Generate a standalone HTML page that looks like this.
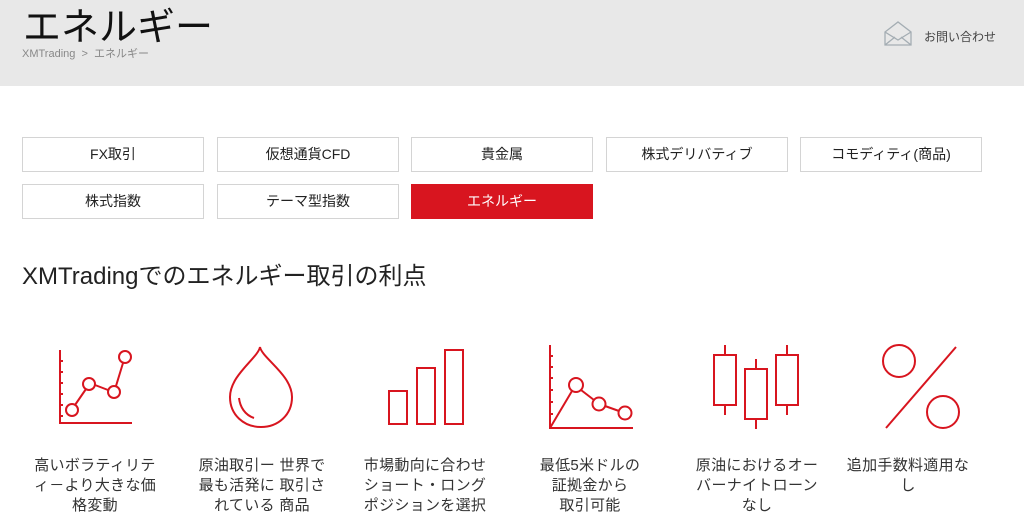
<!DOCTYPE html>
<html><head><meta charset="utf-8"><style>
*{margin:0;padding:0;box-sizing:border-box}
body{width:1024px;height:520px;overflow:hidden;background:#fff;font-family:"Liberation Sans","Noto Sans CJK JP",sans-serif;color:#222;position:relative}
.hdr{position:absolute;left:0;top:0;width:1024px;height:86px;background:#e8e8e8}
.title{position:absolute;left:23px;top:-4px;font-size:38px;color:#111;white-space:nowrap}
.bc{position:absolute;left:22px;top:45px;font-size:11px;color:#888;white-space:nowrap}
.ct{position:absolute;left:924px;top:28px;font-size:12px;color:#444}
.btn{position:absolute;width:182px;height:35px;border:1px solid #d4d4d4;background:#fff;font-size:14px;color:#222;text-align:center;line-height:33px}
.btn.on{background:#d8151f;border-color:#d8151f;color:#fff}
h2{position:absolute;left:22px;top:256px;font-size:24px;font-weight:normal;color:#222;white-space:nowrap}
.t{position:absolute;top:456px;width:160px;text-align:center;font-size:15px;line-height:20px;color:#333;white-space:nowrap;letter-spacing:0.3px}
svg{position:absolute;left:0;top:0}
</style></head><body>
<div class="hdr"></div>
<div class="title">エネルギー</div>
<div class="bc">XMTrading &nbsp;&gt;&nbsp; エネルギー</div>
<div class="ct">お問い合わせ</div>
<div class="btn" style="left:22px;top:137px">FX取引</div>
<div class="btn" style="left:217px;top:137px">仮想通貨CFD</div>
<div class="btn" style="left:411px;top:137px">貴金属</div>
<div class="btn" style="left:606px;top:137px">株式デリバティブ</div>
<div class="btn" style="left:800px;top:137px">コモディティ(商品)</div>
<div class="btn" style="left:22px;top:184px">株式指数</div>
<div class="btn" style="left:217px;top:184px">テーマ型指数</div>
<div class="btn on" style="left:411px;top:184px">エネルギー</div>
<h2>XMTradingでのエネルギー取引の利点</h2>
<svg width="1024" height="520" fill="none" stroke-width="2">
<g stroke="#a4adb3" stroke-width="1.3"><path d="M885 32 L898 22 L911 32 V45 H885 Z M885 32 L898 40 L911 32 M885 45 L895 37 M911 45 L901 37"/></g>
<g stroke="#d8151f">
<path d="M60 350 V423 H132"/>
<path d="M60 361h3M60 372h3M60 383h3M60 394h3M60 405h3M60 416h3"/>
<circle cx="72" cy="410" r="6"/><circle cx="89" cy="384" r="6"/><circle cx="114" cy="392" r="6"/><circle cx="125" cy="357" r="6"/>
<path d="M75 405 L86 389 M95 385 L108 390 M116 386 L123 363"/>
<path d="M260 347 C262 358 292 375 292 397 C292 415 278 427 261 427 C244 427 230 415 230 397 C230 375 258 358 260 347 Z"/>
<path d="M239 398 C240 407 245 415 254 418"/>
<rect x="389" y="391" width="18" height="33"/><rect x="417" y="368" width="18" height="56"/><rect x="445" y="350" width="18" height="74"/>
<path d="M550 345 V428 H633"/>
<path d="M550 356h3M550 367h3M550 378h3M550 390h3M550 402h3M550 414h3"/>
<path d="M550 428 L572 391"/>
<circle cx="576" cy="385" r="7"/><circle cx="599" cy="404" r="6.5"/><circle cx="625" cy="413" r="6.5"/>
<path d="M581 390 L594 400 M605 406 L619 411"/>
<rect x="714" y="355" width="22" height="50"/><path d="M725 345V355M725 405V415"/>
<rect x="745" y="369" width="22" height="50"/><path d="M756 359V369M756 419V429"/>
<rect x="776" y="355" width="22" height="50"/><path d="M787 345V355M787 405V415"/>
<circle cx="899" cy="361" r="16"/><circle cx="943" cy="412" r="16"/><path d="M956 347 L886 428"/>
</g></svg>
<div class="t" style="left:15px">高いボラティリテ<br>ィ－より大きな価<br>格変動</div>
<div class="t" style="left:182px">原油取引ー 世界で<br>最も活発に 取引さ<br>れている 商品</div>
<div class="t" style="left:345px">市場動向に合わせ<br>ショート・ロング<br>ポジションを選択</div>
<div class="t" style="left:510px">最低5米ドルの<br>証拠金から<br>取引可能</div>
<div class="t" style="left:677px">原油におけるオー<br>バーナイトローン<br>なし</div>
<div class="t" style="left:828px">追加手数料適用な<br>し</div>
</body></html>
